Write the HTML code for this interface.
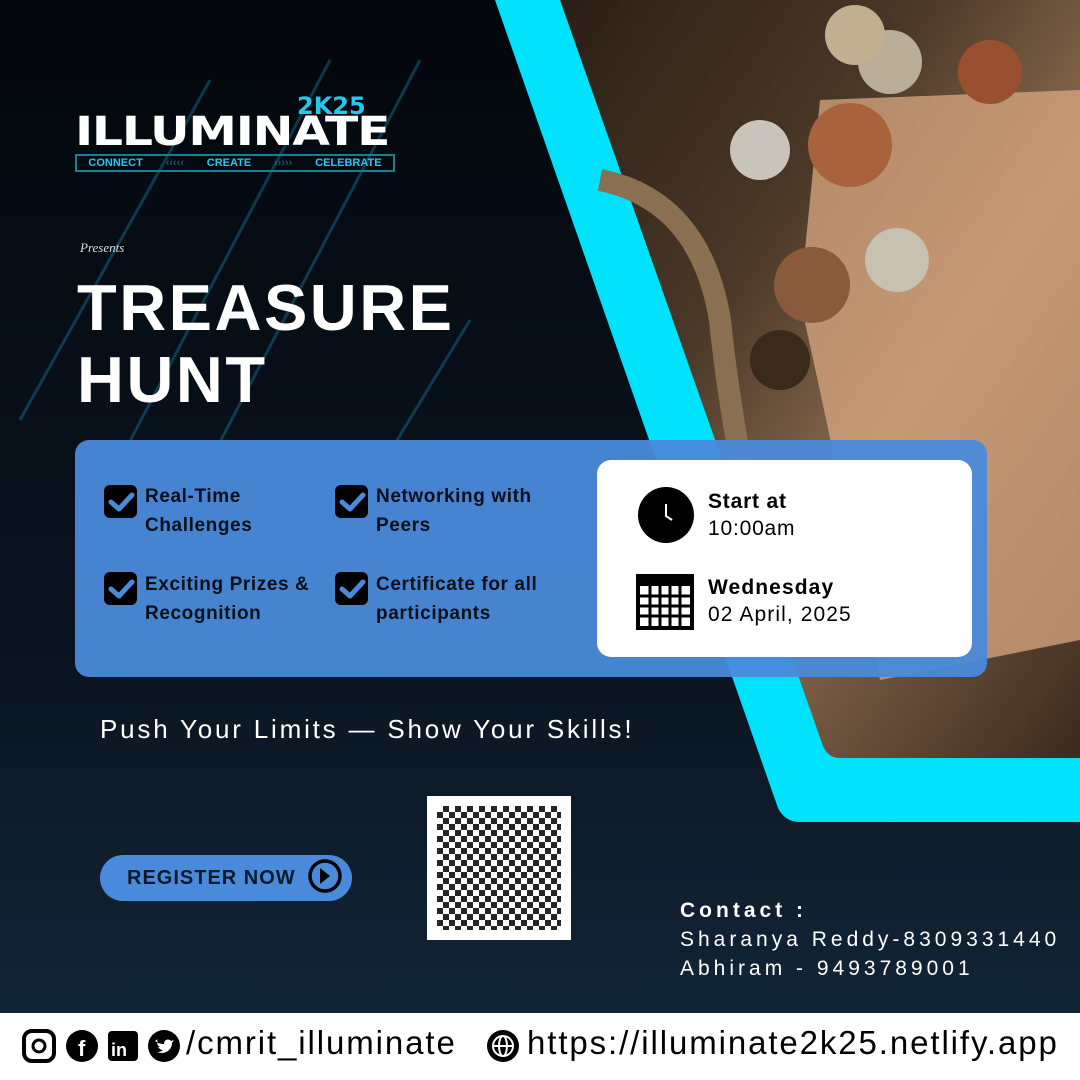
<!DOCTYPE html>
<html><head><meta charset="utf-8"><style>
*{margin:0;padding:0;box-sizing:border-box}
body{width:1080px;height:1080px;overflow:hidden;position:relative;background:#060b12;font-family:"Liberation Sans",sans-serif}
.abs{position:absolute}
.feat{position:absolute;font-weight:bold;font-size:19px;line-height:29px;color:#0a0f18;letter-spacing:0.6px}
.cb{position:absolute;width:33px;height:33px;background:#000;border-radius:6px}
</style></head><body>
<svg class="abs" style="left:0;top:0" width="1080" height="1080">
<defs>
<linearGradient id="bg" x1="0" y1="0" x2="0" y2="1"><stop offset="0" stop-color="#03070c"/><stop offset=".6" stop-color="#0a1420"/><stop offset="1" stop-color="#13283a"/></linearGradient>
<linearGradient id="ph" x1="0" y1="0" x2="1" y2="1"><stop offset="0" stop-color="#2a1f16"/><stop offset=".35" stop-color="#4a3828"/><stop offset=".6" stop-color="#8a6a4e"/><stop offset="1" stop-color="#3a2a1e"/></linearGradient>
</defs>
<rect width="1080" height="1080" fill="url(#bg)"/>
<g stroke="#1fa8d6" stroke-opacity=".3" stroke-width="3">
<line x1="210" y1="80" x2="20" y2="420"/><line x1="330" y1="60" x2="120" y2="460"/><line x1="470" y1="320" x2="300" y2="600"/><line x1="420" y1="60" x2="200" y2="480"/>
</g>
<path d="M495 0 H1080 V822 H800 Q785 822 778 808 Z" fill="#00e1fb"/>
<path d="M560 0 H1080 V758 H840 Q828 758 823 746 Z" fill="url(#ph)"/>
<path d="M820 100 L1080 90 V640 L880 680 Q840 480 800 300 Z" fill="#d9a882" opacity=".75"/>
<circle cx="850" cy="145" r="42" fill="#a8623c"/><circle cx="890" cy="62" r="32" fill="#b8ae98"/><circle cx="855" cy="35" r="30" fill="#c0b090"/><circle cx="990" cy="72" r="32" fill="#9a5030"/><circle cx="760" cy="150" r="30" fill="#c8c4bc"/><circle cx="897" cy="260" r="32" fill="#c8c0b0"/><circle cx="812" cy="285" r="38" fill="#8a5a3c"/><circle cx="780" cy="360" r="30" fill="#3a2a1c"/>
<path d="M600 180 Q700 200 720 320 Q730 420 760 560" stroke="#8a7050" stroke-width="22" fill="none"/>
</svg>
<div class="abs" style="left:75px;top:90px;width:320px">
<div style="position:absolute;left:222px;top:2px;color:#23c8ef;font-weight:900;font-size:24px;font-family:'DejaVu Sans',sans-serif">2K25</div>
<div style="position:absolute;left:0;top:22px;color:#fff;font-weight:bold;font-size:40px;line-height:40px;font-family:'DejaVu Sans',sans-serif;transform:scaleX(1.22);transform-origin:left;white-space:nowrap;letter-spacing:-1px">ILLUMINATE</div>
<div style="position:absolute;left:0;top:64px;width:320px;height:18px;border:2px solid #1d7e92;color:#23c8ef;font-weight:bold;font-size:11px;line-height:14px;display:flex;justify-content:space-around">
<span>CONNECT</span><span style="color:#1a5a72">‹‹‹‹‹</span><span>CREATE</span><span style="color:#1a5a72">›››››</span><span>CELEBRATE</span></div>
</div>
<div class="abs" style="left:80px;top:240px;color:#ddd;font-style:italic;font-size:13px;font-family:'Liberation Serif',serif">Presents</div>
<div class="abs" style="left:77px;top:272px;color:#fff;font-weight:bold;font-size:65px;line-height:72px;letter-spacing:2.5px">TREASURE<br>HUNT</div>
<div class="abs" style="left:75px;top:440px;width:912px;height:237px;background:rgba(74,138,218,.95);border-radius:14px"></div>
<div class="cb" style="left:104px;top:485px"></div><div class="cb" style="left:335px;top:485px"></div>
<div class="cb" style="left:104px;top:572px"></div><div class="cb" style="left:335px;top:572px"></div>
<svg class="abs" style="left:0;top:0" width="600" height="660"><g stroke="#4a8ada" stroke-width="5" fill="none" stroke-linecap="round" stroke-linejoin="round">
<path d="M111 502l8 7 13-14"/><path d="M342 502l8 7 13-14"/><path d="M111 589l8 7 13-14"/><path d="M342 589l8 7 13-14"/></g></svg>
<div class="feat" style="left:145px;top:482px">Real-Time<br>Challenges</div>
<div class="feat" style="left:376px;top:482px">Networking with<br>Peers</div>
<div class="feat" style="left:145px;top:570px">Exciting Prizes &amp;<br>Recognition</div>
<div class="feat" style="left:376px;top:570px">Certificate for all<br>participants</div>
<div class="abs" style="left:597px;top:460px;width:375px;height:197px;background:#fff;border-radius:14px"></div>
<svg class="abs" style="left:630px;top:480px" width="80" height="160">
<circle cx="36" cy="35" r="28" fill="#000"/><path d="M36 24v12l6 4" stroke="#fff" stroke-width="2" fill="none"/>
<rect x="6" y="94" width="58" height="56" fill="#000"/>
<g fill="#fff"><rect x="10" y="106" width="50" height="40"/></g>
<g stroke="#000" stroke-width="3"><line x1="10" y1="116" x2="60" y2="116"/><line x1="10" y1="126" x2="60" y2="126"/><line x1="10" y1="136" x2="60" y2="136"/><line x1="20" y1="106" x2="20" y2="146"/><line x1="30" y1="106" x2="30" y2="146"/><line x1="40" y1="106" x2="40" y2="146"/><line x1="50" y1="106" x2="50" y2="146"/></g>
</svg>
<div class="abs" style="left:708px;top:488px;font-size:21px;line-height:27px;color:#000;letter-spacing:0.8px"><b>Start at</b><br>10:00am</div>
<div class="abs" style="left:708px;top:574px;font-size:21px;line-height:27px;color:#000;letter-spacing:1.1px"><b>Wednesday</b><br>02 April, 2025</div>
<div class="abs" style="left:100px;top:714px;color:#fff;font-size:26px;letter-spacing:2.8px">Push Your Limits — Show Your Skills!</div>
<div class="abs" style="left:427px;top:796px;width:144px;height:144px;background:#fff;padding:10px">
<div style="width:124px;height:124px;background:repeating-conic-gradient(#000 0 25%,#fff 0 50%) 0 0/12px 12px;opacity:.85"></div></div>
<div class="abs" style="left:100px;top:855px;width:252px;height:46px;background:#4a8ada;border-radius:23px;color:#0a1a2a;font-weight:bold;font-size:20px;line-height:46px;padding-left:27px;letter-spacing:1px">REGISTER NOW</div>
<svg class="abs" style="left:305px;top:856px" width="40" height="40"><circle cx="20" cy="20" r="15" stroke="#000" stroke-width="3.5" fill="none"/><path d="M15 12l10 8-10 8z" fill="#000"/></svg>
<div class="abs" style="left:680px;top:896px;color:#fff;font-size:21px;line-height:29px;letter-spacing:4px"><b>Contact :</b><br>Sharanya Reddy-8309331440<br>Abhiram - 9493789001</div>
<div class="abs" style="left:0;top:1013px;width:1080px;height:67px;background:#fff"></div>
<svg class="abs" style="left:22px;top:1028px" width="480" height="36">
<rect x="2" y="3" width="30" height="30" rx="8" stroke="#000" stroke-width="4" fill="none"/><circle cx="17" cy="18" r="6" stroke="#000" stroke-width="3" fill="none"/>
<circle cx="60" cy="18" r="16" fill="#000"/><rect x="86" y="3" width="30" height="30" rx="4" fill="#000"/>
<circle cx="142" cy="18" r="16" fill="#000"/>
<path d="M133 13c3 2 6 3 9 3 0-4 4-6 7-3l3-1-2 3c0 7-7 12-15 9 3 0 5-1 6-2-3 0-4-2-5-3h2c-2-1-3-3-3-4l2 1c-2-2-2-4-1-5z" fill="#fff"/>
<text x="56" y="28" fill="#fff" font-size="22" font-weight="bold" font-family="Liberation Sans">f</text>
<text x="89" y="28" fill="#fff" font-size="18" font-weight="bold" font-family="Liberation Sans">in</text>
</svg>
<div class="abs" style="left:186px;top:1024px;font-size:33px;color:#000;letter-spacing:1.9px">/cmrit_illuminate</div>
<svg class="abs" style="left:486px;top:1029px" width="36" height="36"><circle cx="17" cy="17" r="16" fill="#000"/><g stroke="#fff" stroke-width="2" fill="none"><circle cx="17" cy="17" r="10"/><ellipse cx="17" cy="17" rx="4" ry="10"/><line x1="7" y1="17" x2="27" y2="17"/></g></svg>
<div class="abs" style="left:527px;top:1024px;font-size:33px;color:#000;letter-spacing:1.9px">https://illuminate2k25.netlify.app</div>
</body></html>
